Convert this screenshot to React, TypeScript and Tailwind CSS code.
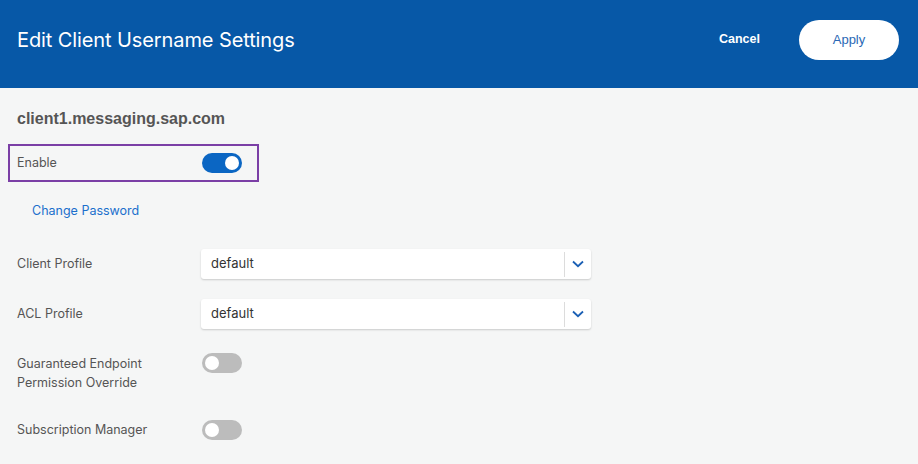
import React from "react";

const Toggle = ({ on, className = "" }: { on: boolean; className?: string }) => (
  <div
    className={`relative w-[40px] h-[20px] rounded-full ${on ? "bg-[#0b66c3]" : "bg-[#bcbcbc]"} ${className}`}
  >
    <div
      className={`absolute top-[3px] w-[14px] h-[14px] rounded-full bg-white ${on ? "left-[23px]" : "left-[3px]"}`}
    />
  </div>
);

const Select = () => (
  <div className="w-[390px] h-[30px] bg-white rounded-[3px] shadow-[0_1px_2px_rgba(0,0,0,0.18)] flex items-center">
    <div className="flex-1 pl-[10px] text-[13px] text-[#333] font-['Inter',sans-serif]">default</div>
    <div className="w-px h-[25px] bg-[#dcdcdc]" />
    <div className="w-[26px] flex items-center justify-center">
      <svg width="12" height="8" viewBox="0 0 12 8">
        <path d="M1 1.5 L6 6.2 L11 1.5" fill="none" stroke="#1a5fb4" strokeWidth="1.8" />
      </svg>
    </div>
  </div>
);

export default function App() {
  return (
    <div className="w-[918px] h-[464px] bg-[#f5f6f6] overflow-hidden font-['Inter',sans-serif]">
      <div className="h-[88px] bg-[#0758a7] flex items-center pl-[17px] pr-[19px] pb-[9px]">
        <div className="text-white text-[20px] leading-none tracking-[-0.1px] flex-1">
          Edit Client Username Settings
        </div>
        <div className="text-white text-[12.5px] font-bold font-['Liberation_Sans',sans-serif] mr-[39px]">
          Cancel
        </div>
        <div className="w-[100px] h-[40px] rounded-full bg-white flex items-center justify-center text-[13px] text-[#2a68b5] font-['Liberation_Sans',sans-serif]">
          Apply
        </div>
      </div>
      <div className="pt-[22px]">
        <div className="pl-[17px] text-[16px] font-bold text-[#555] font-['Liberation_Sans',sans-serif] leading-[18px]">
          client1.messaging.sap.com
        </div>
        <div className="mt-[16px] ml-[8px] w-[251px] h-[38px] border-2 border-[#7b3fa6] flex items-center pl-[7px]">
          <div className="w-[185px] text-[12.5px] text-[#555]">Enable</div>
          <Toggle on />
        </div>
        <div className="mt-[20px] pl-[32px] text-[12.5px] text-[#1b6fcc] leading-[18px]">Change Password</div>
        <div className="mt-[29px] flex items-center">
          <div className="w-[201px] pl-[17px] text-[12.5px] text-[#555]">Client Profile</div>
          <Select />
        </div>
        <div className="mt-[20px] flex items-center">
          <div className="w-[201px] pl-[17px] text-[12.5px] text-[#555]">ACL Profile</div>
          <Select />
        </div>
        <div className="mt-[25px] flex items-start">
          <div className="w-[202px] pl-[17px] text-[12.5px] text-[#555] leading-[19px]">
            Guaranteed Endpoint
            <br />
            Permission Override
          </div>
          <Toggle on={false} className="-mt-[1px]" />
        </div>
        <div className="mt-[28px] flex items-center">
          <div className="w-[202px] pl-[17px] text-[12.5px] text-[#555]">Subscription Manager</div>
          <Toggle on={false} />
        </div>
      </div>
    </div>
  );
}
